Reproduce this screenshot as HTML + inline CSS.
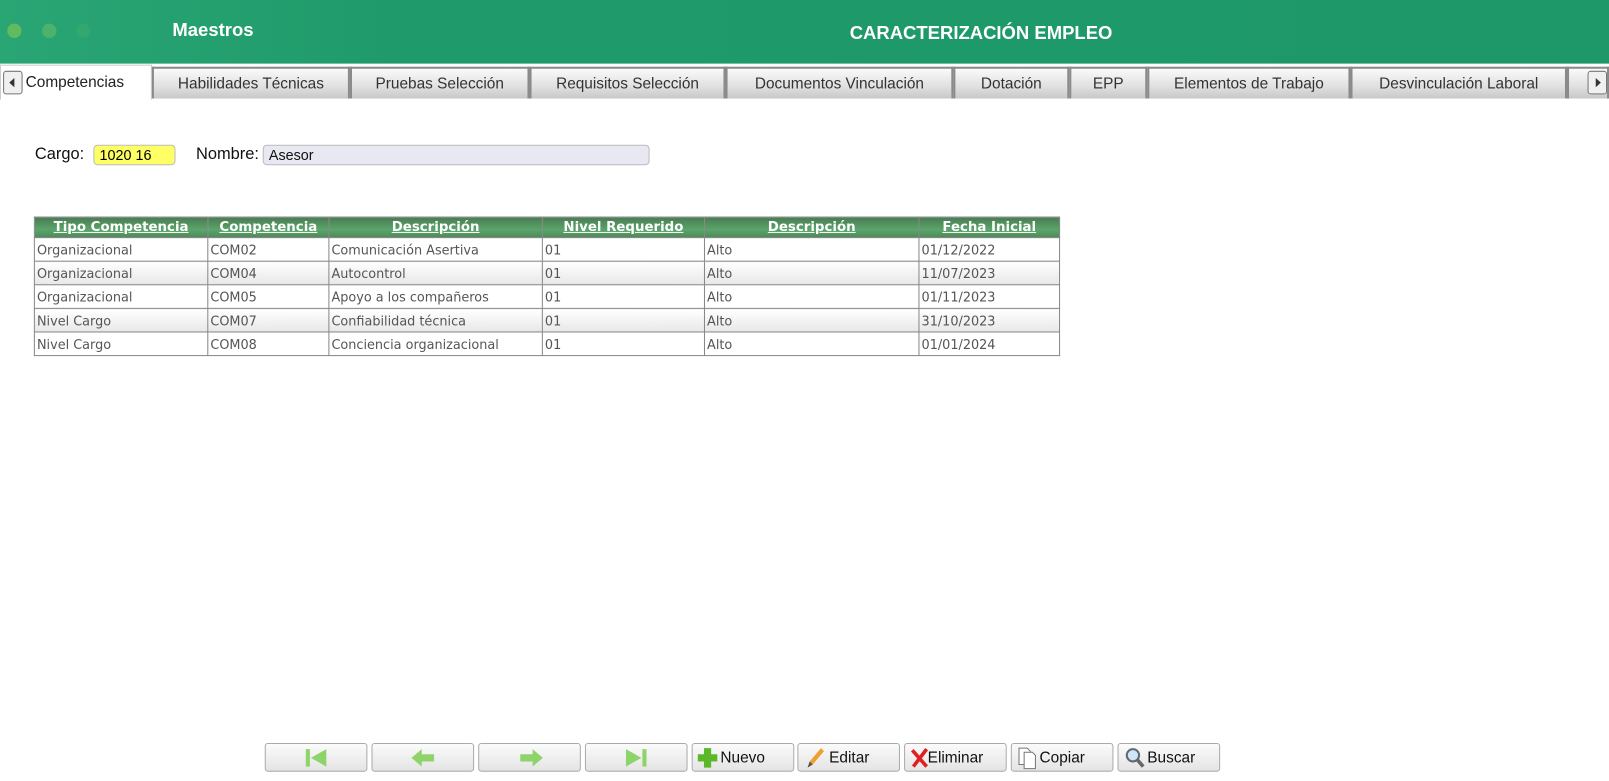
<!DOCTYPE html>
<html><head><meta charset="utf-8"><style>
*{box-sizing:border-box;margin:0;padding:0}
body{width:1609px;height:775px;background:#fff;font-family:"Liberation Sans",sans-serif;position:relative;overflow:hidden}
#w{position:absolute;left:0;top:0;width:1568px;height:755px;transform:scale(1.0262);transform-origin:0 0}
.hdr{position:absolute;left:0;top:0;width:1568px;height:62px;background:linear-gradient(90deg,#2aa574 0%,#1f9a6a 25%,#1e9869 100%)}
.dot{position:absolute;top:23px;width:14px;height:14px;border-radius:50%}
.t1{position:absolute;left:168px;top:19px;color:#fff;font-weight:bold;font-size:18px}
.t2{position:absolute;left:828px;top:22px;color:#fff;font-weight:bold;font-size:18px}
.tabs{position:absolute;left:0;top:63px;width:1568px;height:34px}
.tab{position:absolute;top:2px;height:31px;border:2px solid #8a8a8a;border-bottom:none;background:linear-gradient(#fafafa,#e0e0e0 60%,#c8c8c8);font-size:15px;color:#333;text-align:center;line-height:29px}
.act{background:#fff;border:1px solid #ccc;border-bottom:none;top:0;height:34px;text-align:left;padding-left:24px;color:#222;line-height:34px}
.arr{position:absolute;width:19px;height:23px;border:1px solid #777;border-radius:3px;background:#f0f0f0}
.lbl{position:absolute;font-size:16px;color:#111}
.in{position:absolute;height:20px;border:1px solid #bbb;border-radius:4px;font-size:14px;padding-left:5px;line-height:19px}
table{position:absolute;left:33px;top:211px;border-collapse:collapse;font-family:"DejaVu Sans",sans-serif;font-size:12.5px;color:#555;table-layout:fixed}
th{height:20px;background:linear-gradient(#4b7d55,#5aa56a 60%,#4d8a59);color:#fff;text-decoration:underline;font-size:13px;border:1px solid #888}
td{height:23px;border:1px solid #888;padding-left:2px;white-space:nowrap;overflow:hidden}
tr.g td{background:linear-gradient(#fff,#e8e8e8)}
.btn{position:absolute;top:724px;width:100px;height:28px;border:1px solid #aaa;border-radius:3px;background:linear-gradient(#fbfbfb,#e4e4e4);font-size:15px;color:#111;line-height:27px}
</style></head><body><div id="w">
<div class="hdr">
<div class="dot" style="left:7px;background:#6dc058;opacity:.8"></div>
<div class="dot" style="left:41px;background:#5cb868;opacity:.7"></div>
<div class="dot" style="left:74px;background:#3aab6c;opacity:.6"></div>
<div class="t1">Maestros</div><div class="t2">CARACTERIZACIÓN EMPLEO</div>
</div>
<div class="tabs">
<div class="tab act" style="left:0;width:148px">Competencias</div>
<div class="arr" style="left:3px;top:6px"><svg width="17" height="21"><path d="M10 6L5 10.5L10 15Z" fill="#333"/></svg></div>
<div class="tab" style="left:148px;width:193px">Habilidades Técnicas</div>
<div class="tab" style="left:341px;width:175px">Pruebas Selección</div>
<div class="tab" style="left:516px;width:191px">Requisitos Selección</div>
<div class="tab" style="left:707px;width:222px">Documentos Vinculación</div>
<div class="tab" style="left:929px;width:113px">Dotación</div>
<div class="tab" style="left:1042px;width:76px">EPP</div>
<div class="tab" style="left:1118px;width:198px">Elementos de Trabajo</div>
<div class="tab" style="left:1316px;width:211px">Desvinculación Laboral</div>
<div class="tab" style="left:1527px;width:41px"></div>
<div class="arr" style="left:1547px;top:6px"><svg width="17" height="21"><path d="M7 6L12 10.5L7 15Z" fill="#333"/></svg></div>
</div>
<div class="lbl" style="left:34px;top:142px">Cargo:</div>
<div class="in" style="left:91px;top:141px;width:80px;background:#ffff66;color:#000">1020 16</div>
<div class="lbl" style="left:191px;top:142px">Nombre:</div>
<div class="in" style="left:256px;top:141px;width:377px;background:#e8e8f2;color:#111">Asesor</div>
<table>
<tr><th style="width:169px">Tipo Competencia</th><th style="width:118px">Competencia</th><th style="width:208px">Descripción</th><th style="width:158px">Nivel Requerido</th><th style="width:209px">Descripción</th><th style="width:137px">Fecha Inicial</th></tr>
<tr><td>Organizacional</td><td>COM02</td><td>Comunicación Asertiva</td><td>01</td><td>Alto</td><td>01/12/2022</td></tr>
<tr class="g"><td>Organizacional</td><td>COM04</td><td>Autocontrol</td><td>01</td><td>Alto</td><td>11/07/2023</td></tr>
<tr><td>Organizacional</td><td>COM05</td><td>Apoyo a los compañeros</td><td>01</td><td>Alto</td><td>01/11/2023</td></tr>
<tr class="g"><td>Nivel Cargo</td><td>COM07</td><td>Confiabilidad técnica</td><td>01</td><td>Alto</td><td>31/10/2023</td></tr>
<tr><td>Nivel Cargo</td><td>COM08</td><td>Conciencia organizacional</td><td>01</td><td>Alto</td><td>01/01/2024</td></tr>
</table>
<div class="btn" style="left:258px"><svg width="100" height="27"><rect x="39" y="5" width="4" height="17" fill="#8fd46a"/><path d="M59 5L44 13.5L59 22Z" fill="#8fd46a"/></svg></div>
<div class="btn" style="left:362px"><svg width="100" height="27"><path d="M38 13.5L48 5V10H60V17H48V22Z" fill="#8fd46a"/></svg></div>
<div class="btn" style="left:466px"><svg width="100" height="27"><path d="M62 13.5L52 5V10H40V17H52V22Z" fill="#8fd46a"/></svg></div>
<div class="btn" style="left:570px"><svg width="100" height="27"><rect x="55" y="5" width="4" height="17" fill="#8fd46a"/><path d="M39 5L54 13.5L39 22Z" fill="#8fd46a"/></svg></div>
<div class="btn" style="left:674px"><svg width="22" height="27" style="position:absolute;left:4px"><path d="M7 4H14V10H20V17H14V23H7V17H1V10H7Z" fill="#5cb82a"/></svg><span style="position:absolute;left:27px">Nuevo</span></div>
<div class="btn" style="left:777px"><svg width="22" height="27" style="position:absolute;left:5px"><path d="M4 23L6 17L17 4L20 7L9 20Z" fill="#f0a030"/><path d="M4 23L6 17L9 20Z" fill="#555"/></svg><span style="position:absolute;left:30px">Editar</span></div>
<div class="btn" style="left:881px"><svg width="22" height="27" style="position:absolute;left:4px"><path d="M3 6L17 22M17 5L4 22" stroke="#e02020" stroke-width="3.5"/></svg><span style="position:absolute;left:22px">Eliminar</span></div>
<div class="btn" style="left:985px"><svg width="22" height="27" style="position:absolute;left:4px"><path d="M3 4H11L14 7V20H3Z" fill="#fff" stroke="#777"/><path d="M8 8H16L19 11V24H8Z" fill="#fff" stroke="#777"/></svg><span style="position:absolute;left:27px">Copiar</span></div>
<div class="btn" style="left:1089px"><svg width="24" height="27" style="position:absolute;left:5px"><circle cx="9" cy="11" r="6" fill="#cfe6f7" stroke="#667" stroke-width="2"/><path d="M13 15L19 22" stroke="#666" stroke-width="3.5"/></svg><span style="position:absolute;left:28px">Buscar</span></div>
</div></body></html>
